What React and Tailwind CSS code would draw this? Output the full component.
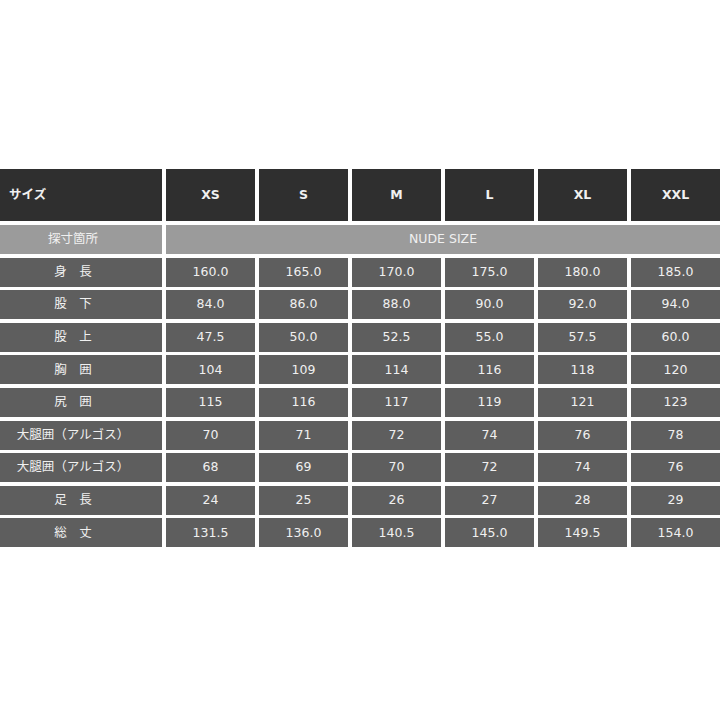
import React from 'react';

const sizes = ['XS', 'S', 'M', 'L', 'XL', 'XXL'];

const rows = [
  ['身\u3000長', ['160.0', '165.0', '170.0', '175.0', '180.0', '185.0']],
  ['股\u3000下', ['84.0', '86.0', '88.0', '90.0', '92.0', '94.0']],
  ['股\u3000上', ['47.5', '50.0', '52.5', '55.0', '57.5', '60.0']],
  ['胸\u3000囲', ['104', '109', '114', '116', '118', '120']],
  ['尻\u3000囲', ['115', '116', '117', '119', '121', '123']],
  ['大腿囲（アルゴス）', ['70', '71', '72', '74', '76', '78']],
  ['大腿囲（アルゴス）', ['68', '69', '70', '72', '74', '76']],
  ['足\u3000長', ['24', '25', '26', '27', '28', '29']],
  ['総\u3000丈', ['131.5', '136.0', '140.5', '145.0', '149.5', '154.0']],
];

function App() {
  return (
    <div
      className="w-[720px] h-[720px] bg-white pt-[169px] text-[12.5px] text-[#f0f0f0]"
      style={{ fontFamily: '"DejaVu Sans", "Noto Sans CJK JP", sans-serif' }}
    >
      <div className="grid grid-cols-[162px_repeat(6,1fr)] gap-x-[4px] gap-y-[3.6px]">
        {/* Header */}
        <div className="h-[52px] bg-[#2f2f2f] flex items-center pl-[9px] font-bold">サイズ</div>
        {sizes.map((s) => (
          <div key={s} className="h-[52px] bg-[#2f2f2f] flex items-center justify-center font-bold">
            {s}
          </div>
        ))}

        {/* Sub header */}
        <div className="h-[29px] mt-[0.5px] bg-[#9b9b9b] flex items-center justify-center pr-[16px]">
          探寸箇所
        </div>
        <div className="col-span-6 h-[29px] mt-[0.5px] bg-[#9b9b9b] flex items-center justify-center">
          NUDE SIZE
        </div>

        {/* Body */}
        {rows.map(([label, vals], i) => (
          <React.Fragment key={i}>
            <div className="h-[29px] bg-[#5e5e5e] flex items-center justify-center pr-[16px]">
              {label}
            </div>
            {vals.map((v, j) => (
              <div key={j} className="h-[29px] bg-[#5e5e5e] flex items-center justify-center">
                {v}
              </div>
            ))}
          </React.Fragment>
        ))}
      </div>
    </div>
  );
}

export default App;
